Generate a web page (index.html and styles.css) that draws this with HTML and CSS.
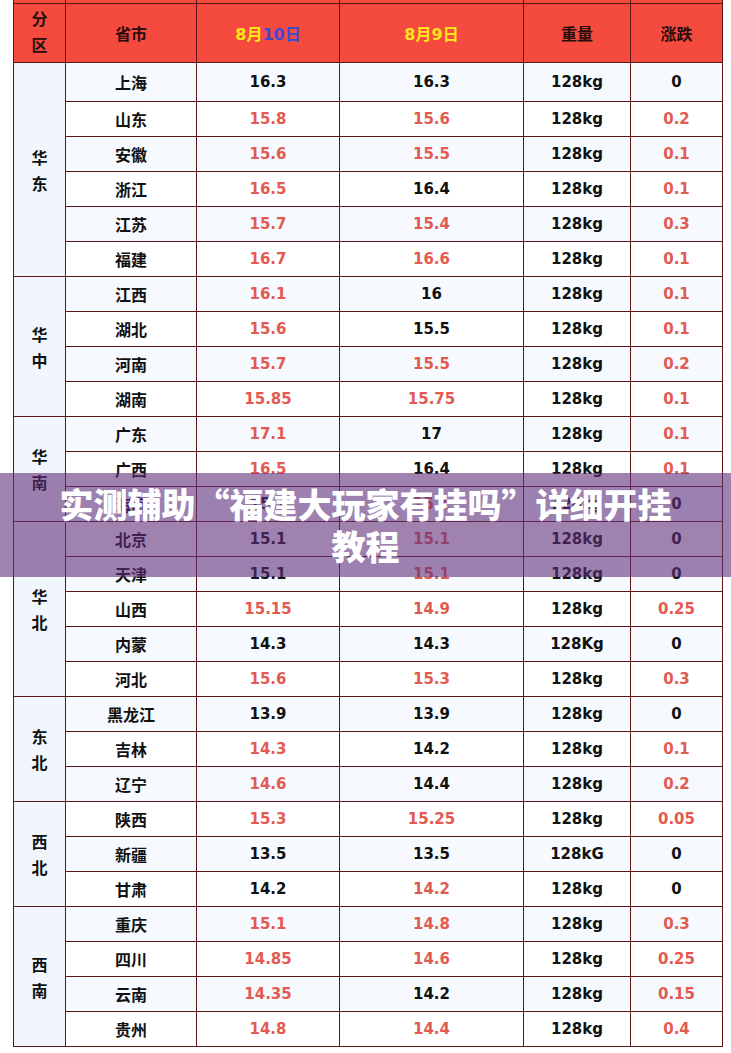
FILE: index.html
```html
<!DOCTYPE html>
<html lang="zh">
<head>
<meta charset="utf-8">
<title>价格表</title>
<link rel="stylesheet" href="styles.css">
</head>
<body>
<div class="page">
<table class="price">
  <colgroup>
    <col class="c-area"><col class="c-prov"><col class="c-d10"><col class="c-d9"><col class="c-wt"><col class="c-chg">
  </colgroup>
  <thead>
    <tr class="cap"><th></th><th></th><th></th><th></th><th></th><th></th></tr>
    <tr class="head">
      <th class="stack">分<br>区</th>
      <th>省市</th>
      <th><span class="yel">8月</span><span class="blu">10日</span></th>
      <th><span class="yel">8月9日</span></th>
      <th>重量</th>
      <th>涨跌</th>
    </tr>
  </thead>
  <tbody>
    <tr class="first alt"><td class="area stack" rowspan="6">华<br>东</td><td class="prov">上海</td><td>16.3</td><td>16.3</td><td>128kg</td><td>0</td></tr>
    <tr><td class="prov">山东</td><td class="r">15.8</td><td class="r">15.6</td><td>128kg</td><td class="r">0.2</td></tr>
    <tr class="alt"><td class="prov">安徽</td><td class="r">15.6</td><td class="r">15.5</td><td>128kg</td><td class="r">0.1</td></tr>
    <tr><td class="prov">浙江</td><td class="r">16.5</td><td>16.4</td><td>128kg</td><td class="r">0.1</td></tr>
    <tr class="alt"><td class="prov">江苏</td><td class="r">15.7</td><td class="r">15.4</td><td>128kg</td><td class="r">0.3</td></tr>
    <tr><td class="prov">福建</td><td class="r">16.7</td><td class="r">16.6</td><td>128kg</td><td class="r">0.1</td></tr>

    <tr class="alt"><td class="area stack" rowspan="4">华<br>中</td><td class="prov">江西</td><td class="r">16.1</td><td>16</td><td>128kg</td><td class="r">0.1</td></tr>
    <tr><td class="prov">湖北</td><td class="r">15.6</td><td>15.5</td><td>128kg</td><td class="r">0.1</td></tr>
    <tr class="alt"><td class="prov">河南</td><td class="r">15.7</td><td class="r">15.5</td><td>128kg</td><td class="r">0.2</td></tr>
    <tr><td class="prov">湖南</td><td class="r">15.85</td><td class="r">15.75</td><td>128kg</td><td class="r">0.1</td></tr>

    <tr class="alt"><td class="area stack" rowspan="3">华<br>南</td><td class="prov">广东</td><td class="r">17.1</td><td>17</td><td>128kg</td><td class="r">0.1</td></tr>
    <tr><td class="prov">广西</td><td class="r">16.5</td><td>16.4</td><td>128kg</td><td class="r">0.1</td></tr>
    <tr class="alt"><td class="prov">海南</td><td>15.1</td><td class="r">15.1</td><td>128kg</td><td>0</td></tr>

    <tr><td class="area stack" rowspan="5">华<br>北</td><td class="prov">北京</td><td>15.1</td><td class="r">15.1</td><td>128kg</td><td>0</td></tr>
    <tr class="alt"><td class="prov">天津</td><td>15.1</td><td class="r">15.1</td><td>128kg</td><td>0</td></tr>
    <tr><td class="prov">山西</td><td class="r">15.15</td><td class="r">14.9</td><td>128kg</td><td class="r">0.25</td></tr>
    <tr class="alt"><td class="prov">内蒙</td><td>14.3</td><td>14.3</td><td>128Kg</td><td>0</td></tr>
    <tr><td class="prov">河北</td><td class="r">15.6</td><td class="r">15.3</td><td>128kg</td><td class="r">0.3</td></tr>

    <tr class="alt"><td class="area stack" rowspan="3">东<br>北</td><td class="prov">黑龙江</td><td>13.9</td><td>13.9</td><td>128kg</td><td>0</td></tr>
    <tr><td class="prov">吉林</td><td class="r">14.3</td><td>14.2</td><td>128kg</td><td class="r">0.1</td></tr>
    <tr class="alt"><td class="prov">辽宁</td><td class="r">14.6</td><td>14.4</td><td>128kg</td><td class="r">0.2</td></tr>

    <tr><td class="area stack" rowspan="3">西<br>北</td><td class="prov">陕西</td><td class="r">15.3</td><td class="r">15.25</td><td>128kg</td><td class="r">0.05</td></tr>
    <tr class="alt"><td class="prov">新疆</td><td>13.5</td><td>13.5</td><td>128kG</td><td>0</td></tr>
    <tr><td class="prov">甘肃</td><td>14.2</td><td class="r">14.2</td><td>128kg</td><td>0</td></tr>

    <tr class="alt"><td class="area stack" rowspan="4">西<br>南</td><td class="prov">重庆</td><td class="r">15.1</td><td class="r">14.8</td><td>128kg</td><td class="r">0.3</td></tr>
    <tr><td class="prov">四川</td><td class="r">14.85</td><td class="r">14.6</td><td>128kg</td><td class="r">0.25</td></tr>
    <tr class="alt"><td class="prov">云南</td><td class="r">14.35</td><td>14.2</td><td>128kg</td><td class="r">0.15</td></tr>
    <tr><td class="prov">贵州</td><td class="r">14.8</td><td class="r">14.4</td><td>128kg</td><td class="r">0.4</td></tr>
  </tbody>
</table>
<div class="banner"><h1 class="banner-title">实测辅助“福建大玩家有挂吗”详细开挂教程</h1></div>
</div>
</body>
</html>
```
FILE: styles.css
```css
html, body {
  margin: 0;
  padding: 0;
  background: #ffffff;
}
.page {
  position: relative;
  width: 731px;
  height: 1053px;
  overflow: hidden;
}
.price {
  border-collapse: collapse;
  table-layout: fixed;
  width: 710px;
  margin: -2px 0 0 13px;
  font-family: "DejaVu Sans", "Noto Sans CJK SC", sans-serif;
  font-weight: bold;
  font-size: 15px;
  color: #111111;
}
.c-area { width: 52px; }
.c-prov { width: 131px; }
.c-d10 { width: 143px; }
.c-d9 { width: 184px; }
.c-wt { width: 107px; }
.c-chg { width: 92px; }
.price th, .price td {
  border: 1px solid #5e1717;
  padding: 0;
  text-align: center;
  vertical-align: middle;
}
.price thead th {
  background: #f44b3e;
  color: #2a0b0b;
  font-family: "DejaVu Sans", "Noto Sans CJK SC", sans-serif;
  font-size: 16px;
}
.cap th {
  height: 4px;
  line-height: 0;
  font-size: 0;
}
.head th {
  height: 58px;
  font-family: "Noto Sans CJK SC", sans-serif;
}
.head th .yel, .head th .blu {
  font-family: "DejaVu Sans", "Noto Sans CJK SC", sans-serif;
  font-size: 16px;
}
.yel { color: #ffe41c; }
.blu { color: #3a4bd6; }
.stack {
  line-height: 26px;
}
.price tbody tr { height: 35px; }
.price tbody tr.first { height: 39px; }
.price tbody tr { background: #ffffff; }
.price tbody tr.alt { background: #f6f9fe; }
.price td.area {
  background: #f1f6fc;
  font-family: "Noto Sans CJK SC", sans-serif;
  font-size: 16px;
  color: #111111;
}
.price td.prov {
  font-family: "Noto Sans CJK SC", sans-serif;
  font-size: 16px;
  color: #111111;
}
.price td.r { color: #e35a50; }

.banner {
  position: absolute;
  left: 0;
  right: 0;
  top: 473px;
  height: 104px;
  background: rgba(96, 46, 122, 0.6);
  display: flex;
  align-items: center;
  justify-content: center;
  padding: 0 45px;
  box-sizing: border-box;
}
.banner-title {
  margin: 0;
  font-family: "Noto Sans CJK SC", sans-serif;
  font-weight: 900;
  font-size: 34px;
  line-height: 42px;
  color: #ffffff;
  text-align: center;
}
```
